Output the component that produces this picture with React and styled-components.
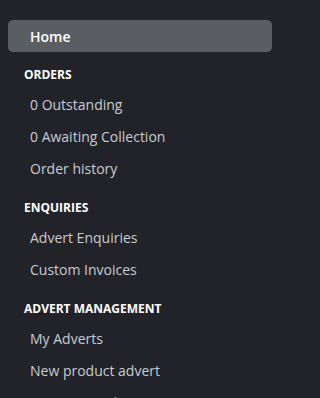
import React from "react";
import styled, { createGlobalStyle } from "styled-components";

const GlobalStyle = createGlobalStyle`
  html, body {
    margin: 0;
    padding: 0;
    background: #212328;
  }
  body {
    font-family: "Open Sans", "Liberation Sans", sans-serif;
    -webkit-font-smoothing: antialiased;
  }
`;

const sections = [
  {
    title: "Orders",
    links: ["0 Outstanding", "0 Awaiting Collection", "Order history"],
  },
  {
    title: "Enquiries",
    links: ["Advert Enquiries", "Custom Invoices"],
  },
  {
    title: "Advert Management",
    links: ["My Adverts", "New product advert", "Manage products"],
  },
];

export default function App() {
  return (
    <>
      <GlobalStyle />
      <SideNav>
        <NavLink href="#" active>
          Home
        </NavLink>
        {sections.map((section) => (
          <Section key={section.title}>
            <SectionTitle>{section.title}</SectionTitle>
            <LinkList>
              {section.links.map((label) => (
                <li key={label}>
                  <NavLink href="#">{label}</NavLink>
                </li>
              ))}
            </LinkList>
          </Section>
        ))}
      </SideNav>
    </>
  );
}

const SideNav = styled.nav`
  display: flex;
  flex-direction: column;
  width: 280px;
  height: 398px;
  padding: 20px 8px 0;
  box-sizing: border-box;
  overflow: hidden;

  & > * {
    flex-shrink: 0;
  }
`;

const NavLink = styled.a`
  display: block;
  height: 32px;
  line-height: 34px;
  padding-left: 22px;
  border-radius: 5px;
  font-size: 14px;
  text-decoration: none;
  white-space: nowrap;
  overflow: hidden;
  color: ${(p) => (p.active ? "#ffffff" : "#c8ccd1")};
  font-weight: ${(p) => (p.active ? 600 : 400)};
  background: ${(p) => (p.active ? "#5a5e62" : "transparent")};
`;

const Section = styled.section`
  margin-top: 14px;
  & + & {
    margin-top: 15px;
  }
`;

const SectionTitle = styled.h3`
  margin: 0 0 4px;
  padding-left: 16px;
  font-size: 12px;
  line-height: 18px;
  font-weight: 700;
  text-transform: uppercase;
  color: #ffffff;
`;

const LinkList = styled.ul`
  list-style: none;
  margin: 0;
  padding: 0;
`;
